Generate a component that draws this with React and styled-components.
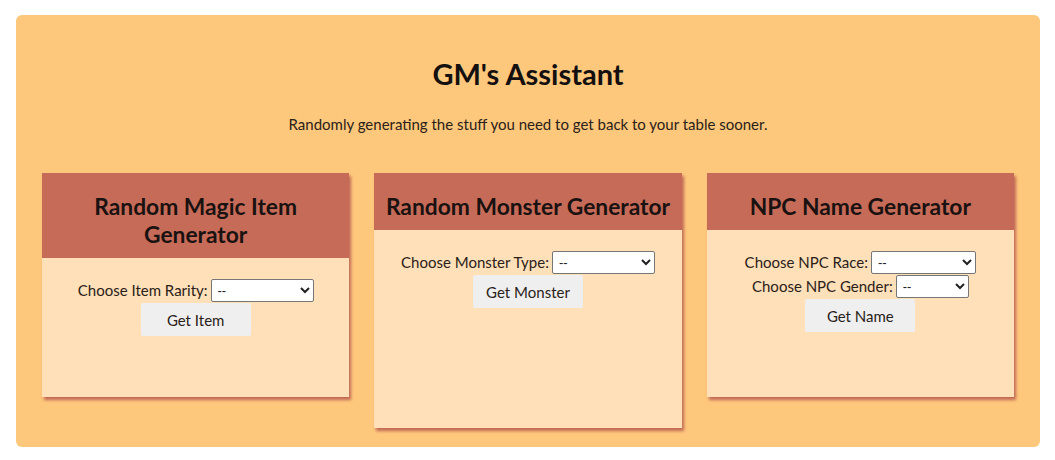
import React from "react";
import styled, { createGlobalStyle } from "styled-components";

const Global = createGlobalStyle`
  html, body { margin: 0; padding: 0; background: #ffffff; }
  body { font-family: "Source Sans Pro", Lato, "Open Sans", sans-serif; color: #1f1a17; }
`;

const Page = styled.div`
  padding: 15px 15px 0 16px;
`;

const Container = styled.main`
  background: #fec87c;
  border-radius: 6px;
  padding: 38px 26px 19px;
  display: flex;
  flex-direction: column;
  align-items: center;
`;

const Title = styled.h1`
  margin: 0;
  font-size: 29px;
  line-height: 42px;
  font-weight: 700;
  color: #141010;
`;

const Subtitle = styled.p`
  margin: 18px 0 0;
  font-size: 15px;
  line-height: 22px;
  color: #2a2118;
`;

const Grid = styled.div`
  margin-top: 38px;
  width: 100%;
  display: grid;
  grid-template-columns: repeat(3, 1fr);
  gap: 25px;
  align-items: start;
`;

const Card = styled.section`
  background: #ffe0b9;
  box-shadow: 2px 3px 3px #c06856;
  display: flex;
  flex-direction: column;
`;

const CardHeader = styled.header`
  background: #c76b59;
  padding: 19px 10px 10px;
  text-align: center;
`;

const CardTitle = styled.h2`
  margin: 0;
  font-size: 22.8px;
  line-height: 28px;
  font-weight: 700;
  color: #1a1210;
`;

const CardBody = styled.div`
  min-height: ${(p) => p.$minHeight}px;
  padding-top: 20px;
  box-sizing: border-box;
  display: flex;
  flex-direction: column;
  align-items: center;
`;

const Row = styled.label`
  display: flex;
  align-items: center;
  gap: 3px;
  font-size: 15px;
  line-height: 24px;
  color: #2a2118;
`;

const Select = styled.select`
  width: ${(p) => p.$w}px;
  height: 23px;
  box-sizing: border-box;
  border: 1px solid #767676;
  border-radius: 2px;
  background: #ffffff;
  font-family: Arial, "Liberation Sans", sans-serif;
  font-size: 13px;
  color: #222;
  padding: 0 2px;
`;

const Button = styled.button`
  margin-top: 1px;
  width: 110px;
  height: 33px;
  border: none;
  border-radius: 2px;
  background: #efefef;
  font-family: inherit;
  font-size: 15px;
  color: #2a2118;
`;

const cards = [
  {
    title: "Random Magic Item Generator",
    rows: [{ label: "Choose Item Rarity:", w: 103 }],
    button: "Get Item",
    h: 139,
  },
  {
    title: "Random Monster Generator",
    rows: [{ label: "Choose Monster Type:", w: 103 }],
    button: "Get Monster",
    h: 198,
  },
  {
    title: "NPC Name Generator",
    rows: [
      { label: "Choose NPC Race:", w: 105 },
      { label: "Choose NPC Gender:", w: 73 },
    ],
    button: "Get Name",
    h: 167,
  },
];

export default function App() {
  return (
    <>
      <Global />
      <Page>
        <Container>
          <Title>GM's Assistant</Title>
          <Subtitle>
            Randomly generating the stuff you need to get back to your table sooner.
          </Subtitle>
          <Grid>
            {cards.map((c) => (
              <Card key={c.title}>
                <CardHeader>
                  <CardTitle>{c.title}</CardTitle>
                </CardHeader>
                <CardBody $minHeight={c.h}>
                  {c.rows.map((r) => (
                    <Row key={r.label}>
                      {r.label}
                      <Select $w={r.w} defaultValue="">
                        <option value="">--</option>
                      </Select>
                    </Row>
                  ))}
                  <Button>{c.button}</Button>
                </CardBody>
              </Card>
            ))}
          </Grid>
        </Container>
      </Page>
    </>
  );
}
